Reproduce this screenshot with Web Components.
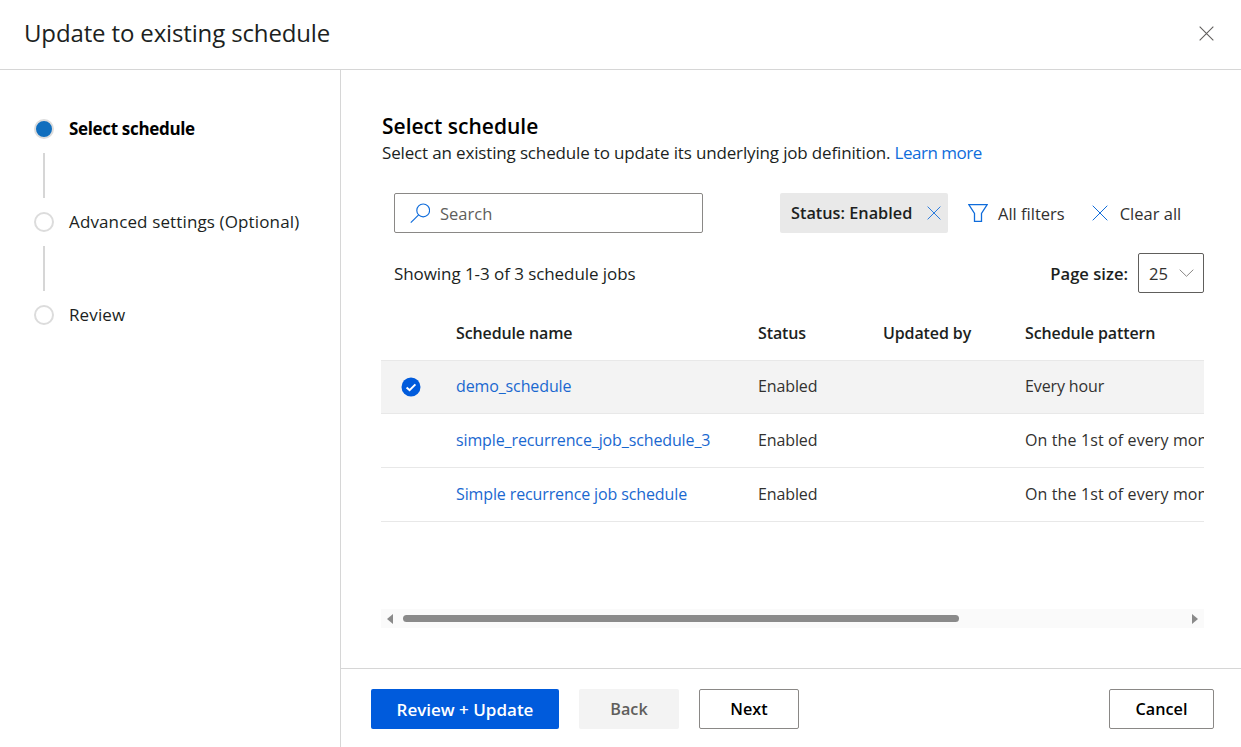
<!DOCTYPE html>
<html lang="en"><head><meta charset="utf-8"><title>Update to existing schedule</title>
<style>
html,body{margin:0;padding:0;height:747px;overflow:hidden;background:#fff}
body{font-family:"Open Sans","Noto Sans",sans-serif;font-size:16px;color:#201f1e}
</style></head><body>
<sched-dialog>
  <wiz-steps slot="nav">
    <wiz-step state="active">Select schedule</wiz-step>
    <wiz-step line>Advanced settings (Optional)</wiz-step>
    <wiz-step line>Review</wiz-step>
  </wiz-steps>
  <sched-toolbar></sched-toolbar>
  <sched-table></sched-table>
  <sched-scrollbar></sched-scrollbar>
  <ui-button slot="footer" kind="primary" w="188">Review + Update</ui-button>
  <ui-button slot="footer" kind="disabled" w="100">Back</ui-button>
  <ui-button slot="footer" w="100">Next</ui-button>
  <ui-button slot="footer" kind="end" w="105">Cancel</ui-button>
</sched-dialog>
<script>
const X=(s,c,w=1)=>`<svg width="${s}" height="${s}" viewBox="0 0 16 16" fill="none" stroke="${c}" stroke-width="${w}" style="display:block;flex:none"><path d="M.7.7 15.3 15.3M15.3.7.7 15.3"/></svg>`;
function def(name,html){customElements.define(name,class extends HTMLElement{connectedCallback(){if(this.shadowRoot)return;const r=this.attachShadow({mode:'open'});r.innerHTML=typeof html==='function'?html(this):html;}})}

def('sched-dialog',`<style>
:host{display:flex;flex-direction:column;height:747px;width:1241px}
header{flex:none;border-bottom:1px solid #d6d6d6;display:flex;align-items:center;justify-content:space-between;padding:0 27px 3px 24px;height:66px}
h1{margin:0;font-size:24px;font-weight:400;color:#201f1e;letter-spacing:-.14px;line-height:32px}
.mid{flex:1;display:flex;min-height:0}
nav{width:340px;flex:none;border-right:1px solid #d6d6d6;display:flex;flex-direction:column;min-height:0}
.side{flex:1;min-width:0;display:flex;flex-direction:column}
main{flex:1;min-height:0;padding:41px 37px 0 40px;display:flex;flex-direction:column}
h2{margin:0;font-size:21px;font-weight:600;line-height:30px;color:#000;padding-left:1px}
p{margin:1px 0 0;line-height:22px;color:#201f1e;font-size:17px;letter-spacing:-.155px;padding-left:1px;white-space:nowrap}
a{color:#0f6cdb;text-decoration:none;letter-spacing:-.5px}
footer{height:79px;flex:none;border-top:1px solid #d6d6d6;box-sizing:border-box;display:flex;gap:20px;padding:20px 27px 0 30px;align-items:flex-start}
</style>
<header><h1>Update to existing schedule</h1><span>${X(15,'#605e5c',1.15)}</span></header>
<div class="mid"><nav><slot name="nav"></slot></nav>
<div class="side"><main><h2>Select schedule</h2><p>Select an existing schedule to update its underlying job definition. <a href="#">Learn more</a></p><slot></slot></main>
<footer><slot name="footer"></slot></footer></div></div>`);

def('wiz-steps',`<style>:host{display:flex;flex-direction:column;padding:49px 0 0 34px}</style><slot></slot>`);

def('wiz-step',h=>{const a=h.getAttribute('state')==='active',l=h.hasAttribute('line');return `<style>
:host{display:block}
.ln{width:2px;height:45px;background:#d6d6d6;margin:14px 0 14px 9px}
.r{display:flex;align-items:center;gap:15px;height:20px}
.dot{width:20px;height:20px;box-sizing:border-box;border-radius:50%;border:2px solid #dcdcdc;background:${a?'#106ebe':'#fff'};flex:none}
span{font-weight:${a?700:400};color:${a?'#000':'#201f1e'};font-size:17px;letter-spacing:${a?'-.33px':'.13px'};line-height:20px;white-space:nowrap}
</style>${l?'<div class="ln"></div>':''}<div class="r"><div class="dot"></div><span><slot></slot></span></div>`});

def('sched-toolbar',`<style>
:host{display:block;margin-top:29px;font-size:16.5px}
.t{display:flex;align-items:center;height:40px;padding-left:13px}
.s{width:309px;height:40px;box-sizing:border-box;border:1px solid #8a8886;border-radius:2px;display:flex;align-items:center;gap:10px;padding-left:15px;color:#605e5c}
.chip{margin-left:77px;height:40px;width:168px;box-sizing:border-box;background:#e9e9e9;border-radius:2px;display:flex;align-items:center;padding-left:11px;gap:15px;color:#201f1e;font-weight:600;white-space:nowrap;font-size:16.3px}
.b{display:flex;align-items:center;color:#323130;white-space:nowrap}
.t2{display:flex;align-items:center;justify-content:space-between;height:40px;margin-top:20px;padding-left:13px}
.sh{font-size:17px;letter-spacing:-.07px}
.ps{display:flex;align-items:center;gap:10px;font-weight:600;color:#201f1e;font-size:16.6px}
.sel{width:66px;height:40px;box-sizing:border-box;border:1px solid #605e5c;border-radius:2px;display:flex;align-items:center;justify-content:space-between;padding:0 9px 0 10px;font-weight:400;color:#323130}
</style>
<div class="t"><div class="s"><svg width="20" height="20" viewBox="0 0 20 20" fill="none" stroke="#0f6cdb" stroke-width="1.15"><circle cx="13.2" cy="7.4" r="6.4"/><path d="M8.6 11.9 .8 19.6"/></svg>Search</div>
<div class="chip">Status: Enabled ${X(14,'#0f6cdb')}</div>
<div class="b" style="margin-left:20px;gap:10px"><svg width="20" height="20" viewBox="0 0 20 20" fill="none" stroke="#0f6cdb" stroke-width="1.3" style="display:block"><path d="M.8 1.6h18.4L13.5 10.4v8h-7v-8z"/></svg>All filters</div>
<div class="b" style="margin-left:27px;gap:12px">${X(16,'#0f6cdb')}Clear all</div></div>
<div class="t2"><span class="sh">Showing 1-3 of 3 schedule jobs</span><div class="ps">Page size:<div class="sel">25<svg width="15" height="8" viewBox="0 0 15 8" fill="none" stroke="#8a8886"><path d="M.7.7 7.5 7.3 14.3.7"/></svg></div></div></div>`);

const rows=[['demo_schedule','Enabled','','Every hour',1],['simple_recurrence_job_schedule_3','Enabled','','On the 1st of every month'],['Simple recurrence job schedule','Enabled','','On the 1st of every month']];
def('sched-table',`<style>
:host{display:block;overflow:hidden;letter-spacing:-.12px}
.g{display:grid;grid-template-columns:75px 302px 125px 142px 260px;width:904px;align-items:center;white-space:nowrap}
.h{height:67px;font-weight:600;color:#201f1e}
.h>div{padding-top:13px}
.row{border-top:1px solid #e8e8e8;height:54px;box-sizing:border-box;color:#323130;padding-bottom:2px}
.row.sel{background:#f3f3f3;height:53px}
.row.last{border-bottom:1px solid #e8e8e8;height:55px}
a{color:#1a68d0;text-decoration:none}
.c{display:flex;justify-content:center;padding-right:15px}
.w{letter-spacing:.12px}
</style>
<div class="g h"><div></div><div>Schedule name</div><div>Status</div><div>Updated by</div><div>Schedule pattern</div></div>
${rows.map((r,i)=>`<div class="g row${r[4]?' sel':''}${i==2?' last':''}"><div class="c">${r[4]?'<svg width="20" height="20" viewBox="0 0 20 20" style="display:block;margin-top:2px"><circle cx="10" cy="10" r="9.5" fill="#005bdc"/><path d="M5.6 10.4 8.6 13.2 14.4 7.4" fill="none" stroke="#fff" stroke-width="2"/></svg>':''}</div><div><a href="#">${r[0]}</a></div><div>${r[1]}</div><div>${r[2]}</div><div class="${r[4]?'':'w'}">${r[3]}</div></div>`).join('')}`);

def('sched-scrollbar',`<style>
:host{display:flex;align-items:center;height:19px;margin-top:87px;background:#fafafa}
.l,.r{width:0;height:0;border-top:5px solid transparent;border-bottom:5px solid transparent;flex:none}
.l{border-right:6px solid #8a8a8a;margin-left:6px}
.th{height:7px;background:#8a8a8a;border-radius:4px;width:556px;margin-left:10px}
.r{border-left:6px solid #8a8a8a;margin-left:auto;margin-right:6px}
</style><div class="l"></div><div class="th"></div><div class="r"></div>`);

def('ui-button',h=>{const k=h.getAttribute('kind');return `<style>
:host{display:block;${k==='end'?'margin-left:auto;':''}}
button{display:block;width:${h.getAttribute('w')}px;height:40px;box-sizing:border-box;border-radius:2px;font:600 ${k==='primary'?17:16.2}px "Open Sans","Noto Sans",sans-serif;padding:0;
${k==='primary'?'background:#005bdc;color:#fff;border:0;':k==='disabled'?'background:#f3f3f3;color:#605e5c;border:0;':'background:#fff;color:#000;border:1px solid #8a8886;'}}
</style><button><slot></slot></button>`});
</script>
</body></html>
